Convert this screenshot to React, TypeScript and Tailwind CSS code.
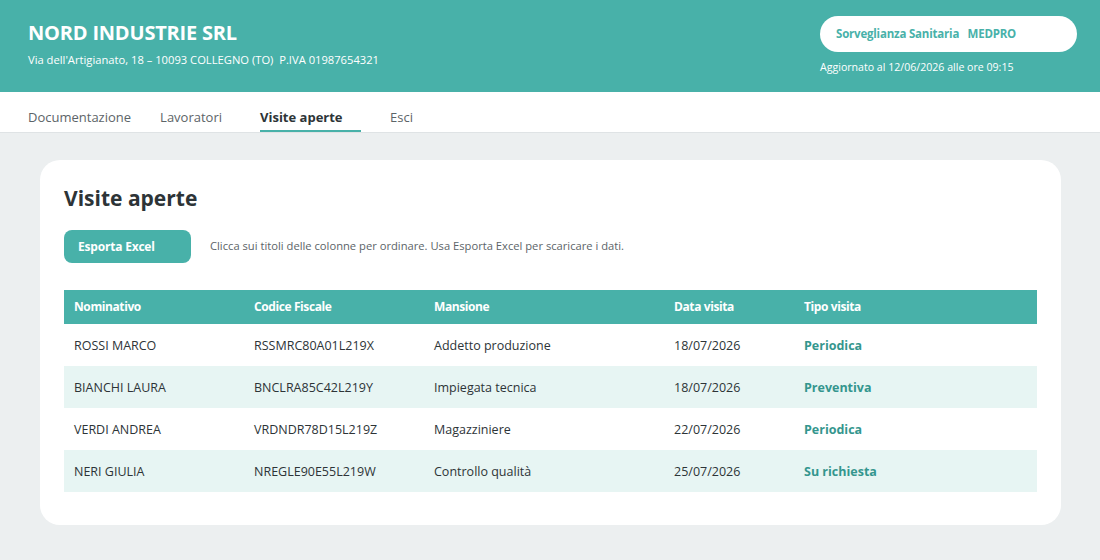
import React from 'react';

const rows = [
  { nome: 'ROSSI MARCO', cf: 'RSSMRC80A01L219X', mansione: 'Addetto produzione', data: '18/07/2026', tipo: 'Periodica' },
  { nome: 'BIANCHI LAURA', cf: 'BNCLRA85C42L219Y', mansione: 'Impiegata tecnica', data: '18/07/2026', tipo: 'Preventiva' },
  { nome: 'VERDI ANDREA', cf: 'VRDNDR78D15L219Z', mansione: 'Magazziniere', data: '22/07/2026', tipo: 'Periodica' },
  { nome: 'NERI GIULIA', cf: 'NREGLE90E55L219W', mansione: 'Controllo qualità', data: '25/07/2026', tipo: 'Su richiesta' },
];

export default function App() {
  return (
    <div className="min-h-[560px] bg-[#eceff0] font-['Open_Sans',sans-serif] text-[#2d3437]">
      {/* Header */}
      <header className="flex h-[92px] items-start justify-between bg-[#48b1a9] pl-7 pr-[23px] text-white">
        <div className="pt-[19px]">
          <h1 className="text-[20px] font-bold leading-7 tracking-[-0.2px]">NORD INDUSTRIE SRL</h1>
          <p className="mt-[5px] text-[11.2px] leading-4">
            Via dell'Artigianato, 18 – 10093 COLLEGNO (TO)&nbsp;&nbsp;P.IVA 01987654321
          </p>
        </div>
        <div className="pt-4">
          <div className="flex h-9 w-[257px] items-center rounded-full bg-white px-4 text-[11.5px] font-bold tracking-[-0.2px] text-[#48b1a9]">
            Sorveglianza Sanitaria&nbsp;&nbsp;&nbsp;MEDPRO
          </div>
          <p className="mt-[7px] text-[10.6px] leading-4">Aggiornato al 12/06/2026 alle ore 09:15</p>
        </div>
      </header>

      {/* Nav */}
      <nav className="flex h-[41px] items-end border-b border-[#dfe3e5] bg-white px-7 text-[13px] leading-5 text-[#5c6468]">
        <div className="mr-[29px] border-b-2 border-transparent pb-[3px]">Documentazione</div>
        <div className="mr-[38px] border-b-2 border-transparent pb-[3px]">Lavoratori</div>
        <div className="mr-[29px] w-[101px] border-b-2 border-[#48b1a9] pb-[3px] font-bold text-[#2d3437]">Visite aperte</div>
        <div className="border-b-2 border-transparent pb-[3px]">Esci</div>
      </nav>

      {/* Content */}
      <main className="pl-10 pr-[39px] pt-[27px] pb-[35px]">
        <section className="rounded-[20px] bg-white px-6 pt-[22px] pb-[33px]">
          <h2 className="text-[21px] font-bold leading-8">Visite aperte</h2>
          <div className="mt-[16px] flex items-center gap-[19px]">
            <button className="h-[33px] w-[127px] rounded-lg bg-[#48b1a9] pl-[14px] text-left text-[12px] font-bold tracking-[-0.2px] text-white">
              Esporta Excel
            </button>
            <p className="text-[11.2px] text-[#5c6468]">
              Clicca sui titoli delle colonne per ordinare. Usa Esporta Excel per scaricare i dati.
            </p>
          </div>

          <table className="mt-[27px] w-full border-collapse text-left text-[12.5px]">
            <thead>
              <tr className="h-[34px] bg-[#48b1a9] text-[12px] tracking-[-0.4px] text-white">
                <th className="w-[180px] px-[10px] font-bold">Nominativo</th>
                <th className="w-[180px] px-[10px] font-bold">Codice Fiscale</th>
                <th className="w-[240px] px-[10px] font-bold">Mansione</th>
                <th className="w-[130px] px-[10px] font-bold">Data visita</th>
                <th className="px-[10px] font-bold">Tipo visita</th>
              </tr>
            </thead>
            <tbody>
              {rows.map((r, i) => (
                <tr key={r.cf} className={'h-[42px] ' + (i % 2 === 1 ? 'bg-[#e7f5f3]' : 'bg-white')}>
                  <td className="px-[10px] pt-[2px]">{r.nome}</td>
                  <td className="px-[10px] pt-[2px]">{r.cf}</td>
                  <td className="px-[10px] pt-[2px]">{r.mansione}</td>
                  <td className="px-[10px] pt-[2px]">{r.data}</td>
                  <td className="px-[10px] pt-[2px] font-bold text-[#34968e]">{r.tipo}</td>
                </tr>
              ))}
            </tbody>
          </table>
        </section>
      </main>
    </div>
  );
}
